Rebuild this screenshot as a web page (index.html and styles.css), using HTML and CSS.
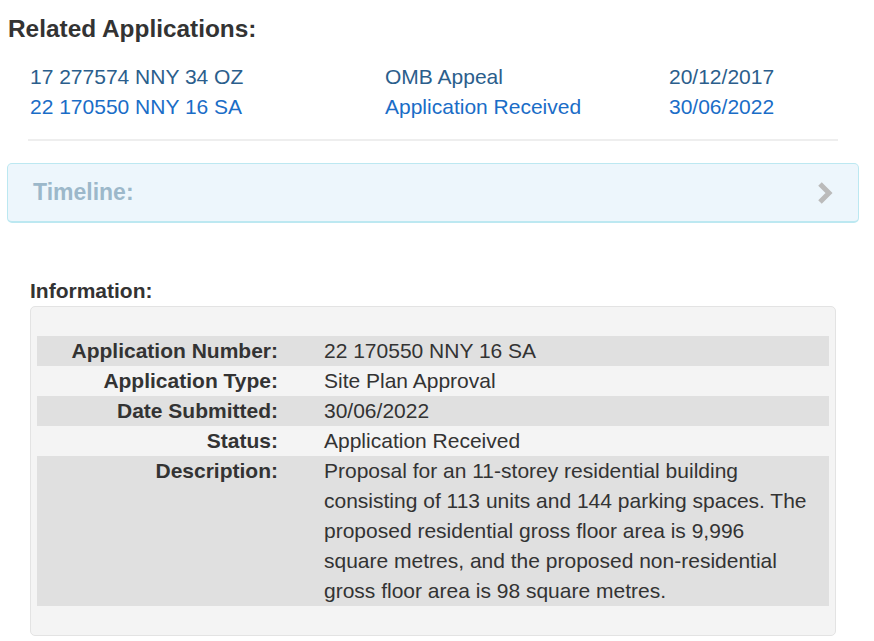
FILE: index.html
```html
<!DOCTYPE html>
<html>
<head>
<meta charset="utf-8">
<link rel="stylesheet" href="styles.css">
</head>
<body>
<h2 class="related-title">Related Applications:</h2>
<div class="rel-list">
  <a class="rel-link visited" href="#">17 277574 NNY 34 OZ</a>
  <a class="rel-link visited" href="#">OMB Appeal</a>
  <a class="rel-link visited" href="#">20/12/2017</a>
  <a class="rel-link" href="#">22 170550 NNY 16 SA</a>
  <a class="rel-link" href="#">Application Received</a>
  <a class="rel-link" href="#">30/06/2022</a>
</div>
<div class="divider"></div>
<div class="timeline">
  <span class="timeline-title">Timeline:</span>
  <svg class="chevron" width="16" height="22" viewBox="0 0 16 22"><polyline points="3,2 12,11 3,20" fill="none" stroke="#bbbbbb" stroke-width="5" stroke-linejoin="miter"/></svg>
</div>
<h3 class="info-title">Information:</h3>
<div class="well">
  <table class="info-table">
    <tr class="stripe"><th>Application Number:</th><td>22 170550 NNY 16 SA</td></tr>
    <tr><th>Application Type:</th><td>Site Plan Approval</td></tr>
    <tr class="stripe"><th>Date Submitted:</th><td>30/06/2022</td></tr>
    <tr><th>Status:</th><td>Application Received</td></tr>
    <tr class="stripe"><th>Description:</th><td>Proposal for an 11-storey residential building consisting of 113 units and 144 parking spaces. The proposed residential gross floor area is 9,996 square metres, and the proposed non-residential gross floor area is 98 square metres.</td></tr>
  </table>
</div>
</body>
</html>
```
FILE: styles.css
```css
body {
  margin: 0;
  font-family: "Liberation Sans", Arial, sans-serif;
  color: #333333;
  background: #ffffff;
}
.related-title {
  margin: 0 0 0 8px;
  padding-top: 14px;
  font-size: 24.4px;
  line-height: 30px;
  font-weight: bold;
  color: #333333;
}
.rel-list {
  margin: 18px 0 0 30px;
  width: 808px;
  display: grid;
  grid-template-columns: 355px 284px 1fr;
  grid-auto-rows: 30px;
  font-size: 21px;
  line-height: 30px;
}
.rel-link {
  color: #1a6dc7;
  text-decoration: none;
}
.rel-link.visited {
  color: #2b5e8c;
}
.divider {
  margin: 17px 0 0 28px;
  width: 810px;
  height: 2px;
  background: #eeeeee;
}
.timeline {
  margin: 22px 0 0 7px;
  border: 1px solid #bce8f1;
  border-bottom-width: 2px;
  border-radius: 5px;
  background: #edf6fc;
  display: flex;
  align-items: center;
  justify-content: space-between;
  padding: 0 25px;
  box-sizing: content-box;
  width: 800px;
  height: 57px;
}
.timeline-title {
  font-size: 23px;
  font-weight: bold;
  color: #9cb8ca;
}
.chevron {
  display: block;
}
.info-title {
  margin: 53px 0 0 30px;
  font-size: 21px;
  line-height: 30px;
  font-weight: bold;
  color: #333333;
}
.well {
  margin-left: 30px;
  width: 792px;
  padding: 29px 6px;
  border: 1px solid #e3e3e3;
  border-radius: 5px;
  background: #f4f4f4;
}
.info-table {
  width: 100%;
  border-collapse: collapse;
  font-size: 21px;
  line-height: 30px;
}
.info-table th {
  width: 241px;
  padding: 0;
  text-align: right;
  vertical-align: top;
  font-weight: bold;
  color: #333333;
}
.info-table td {
  padding: 0 21px 0 46px;
  vertical-align: top;
  color: #333333;
}
.info-table tr.stripe {
  background: #e0e0e0;
}
```
